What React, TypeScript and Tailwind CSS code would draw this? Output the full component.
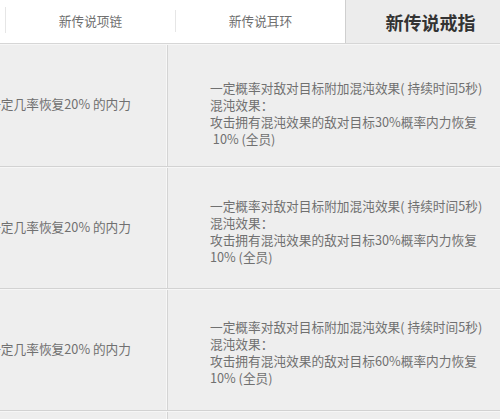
import React from "react";

const rows = [
  { pt: "pt-[34px]", pct: "30%", indent: true },
  { pt: "pt-[29px]", pct: "30%", indent: false },
  { pt: "pt-[28px]", pct: "60%", indent: false },
  { pt: "pt-[28px]", pct: "60%", indent: false },
];

export default function App() {
  return (
    <div
      className="w-[500px] h-[419px] overflow-hidden bg-[#eeeeee] text-[#707070]"
      style={{ fontFamily: '"Noto Sans CJK SC", "Noto Sans", sans-serif' }}
    >
      {/* Header tabs */}
      <div className="flex h-[44px] bg-white border-b border-[#d6d6d6] overflow-hidden">
        <div className="w-[5px] shrink-0" />
        <div className="w-px h-[26px] mt-[7px] bg-[#e6e6e6] shrink-0" />
        <div className="w-[169px] shrink-0 flex items-center justify-center text-[12.7px] text-[#707070] leading-none">
          新传说项链
        </div>
        <div className="w-px h-[22px] mt-[10px] bg-[#e6e6e6] shrink-0" />
        <div className="w-[169px] shrink-0 flex items-center justify-center text-[12.7px] text-[#707070] leading-none">
          新传说耳环
        </div>
        <div className="w-[170px] shrink-0 bg-[#ececec] border-l border-[#cfcfcf] flex items-center justify-center text-[18px] font-bold text-[#333] leading-none pt-[1px]">
          新传说戒指
        </div>
      </div>

      {/* Body rows */}
      {rows.map((r, i) => (
        <div
          key={i}
          className={`flex ${i === 0 ? "h-[123px]" : "h-[122px]"} border-b border-[#d2d2d2] border-t border-t-[#f6f6f6] overflow-hidden`}
        >
          <div className="w-[166px] shrink-0 flex justify-end pr-[35px] pt-[50px] overflow-hidden">
            <div className="whitespace-nowrap text-[12.7px] leading-[17px]">
              一定几率恢复20% 的内力
            </div>
          </div>
          <div className="w-px shrink-0 bg-[#f7f7f7]" />
          <div className="w-px shrink-0 bg-[#d4d4d4]" />
          <div className={`flex-1 pl-[42px] ${r.pt} text-[12.7px] leading-[17px] whitespace-nowrap`}>
            <div>一定概率对敌对目标附加混沌效果( 持续时间5秒)</div>
            <div>混沌效果：</div>
            <div>攻击拥有混沌效果的敌对目标{r.pct}概率内力恢复</div>
            <div className="whitespace-pre">{r.indent ? " 10% (全员)" : "10% (全员)"}</div>
          </div>
        </div>
      ))}
    </div>
  );
}
